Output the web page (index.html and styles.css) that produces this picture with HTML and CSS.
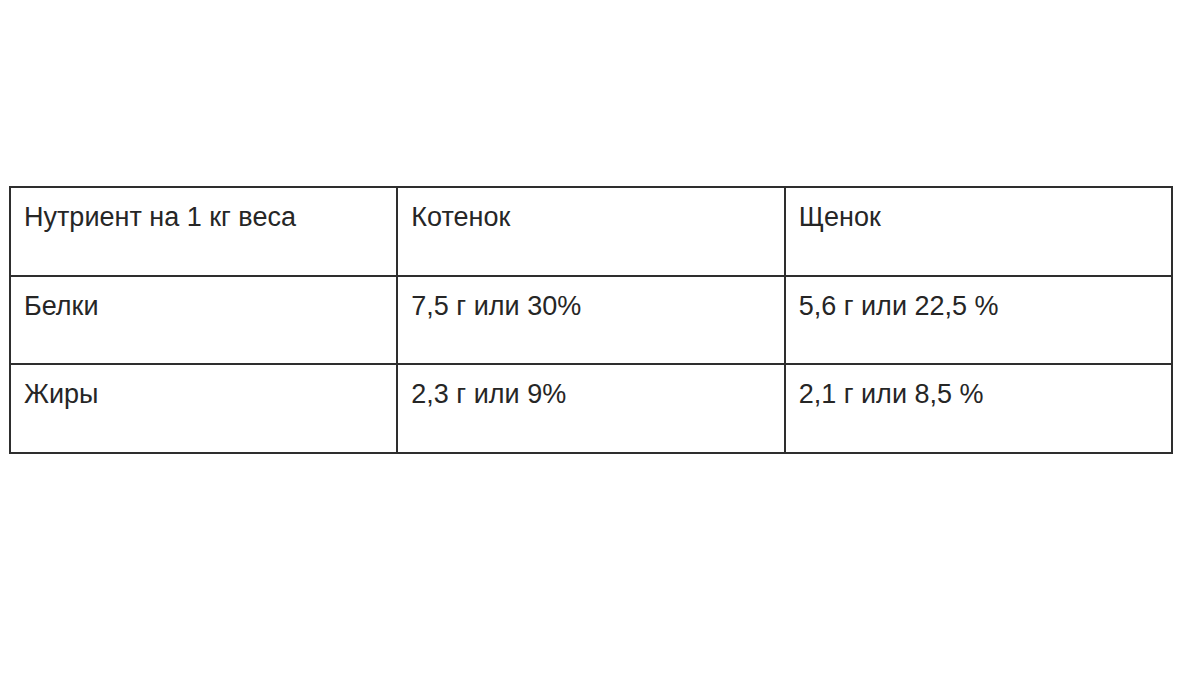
FILE: index.html
```html
<!DOCTYPE html>
<html lang="ru">
<head>
<meta charset="utf-8">
<link rel="stylesheet" href="styles.css">
</head>
<body>
<div class="page">
  <table class="nutrients">
    <tr>
      <td>Нутриент на 1 кг веса</td>
      <td>Котенок</td>
      <td>Щенок</td>
    </tr>
    <tr>
      <td>Белки</td>
      <td>7,5 г или 30%</td>
      <td>5,6 г или 22,5 %</td>
    </tr>
    <tr>
      <td>Жиры</td>
      <td>2,3 г или 9%</td>
      <td>2,1 г или 8,5 %</td>
    </tr>
  </table>
</div>
</body>
</html>
```

FILE: styles.css
```css
html, body {
  margin: 0;
  padding: 0;
  background: #ffffff;
}
.page {
  width: 1200px;
  height: 675px;
  padding: 186px 0 0 9px;
  box-sizing: border-box;
}
.nutrients {
  border-collapse: collapse;
  width: 1164px;
  table-layout: fixed;
  font-family: "Liberation Sans", Arial, sans-serif;
  font-size: 27px;
  color: #262626;
}
.nutrients td {
  border: 2px solid #2e2e2e;
  height: 88.5px;
  box-sizing: border-box;
  vertical-align: top;
  padding: 14px 12px 0 13px;
  line-height: 31px;
}
```
